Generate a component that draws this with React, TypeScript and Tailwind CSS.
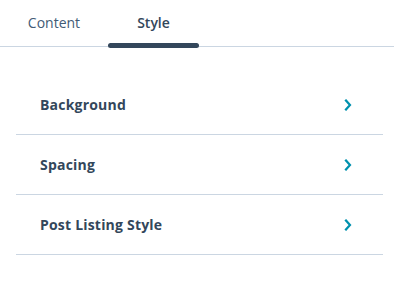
const rows = ["Background", "Spacing", "Post Listing Style"];

function Chevron() {
  return (
    <svg width="8" height="12" viewBox="0 0 8 12" fill="none">
      <path d="M2 1.5L6 6L2 10.5" stroke="#0091ae" strokeWidth="2.2" strokeLinecap="square" />
    </svg>
  );
}

export default function App() {
  return (
    <div className="w-[394px] h-[295px] bg-white text-[#33475b] font-['Open_Sans',sans-serif]">
      <div className="flex h-[47px] border-b border-[#cbd6e2]">
        <div className="w-[108px] flex items-center justify-center text-[14px] text-[#425b76] pb-[2px]">
          Content
        </div>
        <div className="relative w-[91px] flex items-center justify-center text-[14px] font-semibold pb-[2px]">
          Style
          <div className="absolute left-0 right-0 bottom-[-2px] h-[5px] rounded-full bg-[#33475b]" />
        </div>
      </div>
      <div className="pl-4 pr-[11px] pt-[28px]">
        {rows.map((r) => (
          <div
            key={r}
            className="flex items-center justify-between h-[60px] border-b border-[#cbd6e2] pl-6 pr-[31px]"
          >
            <span className="text-[14px] font-bold tracking-[0.2px]">{r}</span>
            <Chevron />
          </div>
        ))}
      </div>
    </div>
  );
}
